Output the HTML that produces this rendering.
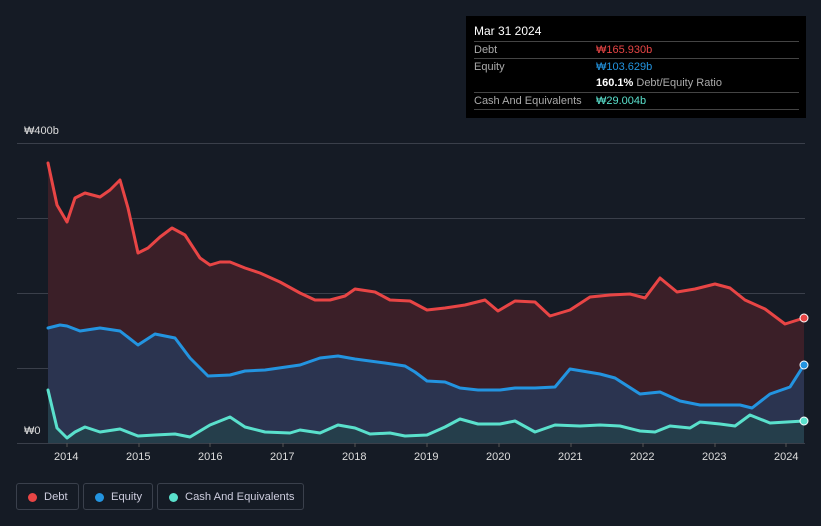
<!DOCTYPE html>
<html><head><style>
body{margin:0;width:821px;height:526px;background:#151b25;font-family:"Liberation Sans",sans-serif;overflow:hidden;position:relative}
.tt{position:absolute;left:466px;top:16px;width:340px;height:102px;background:#000;color:#fff;font-size:11px}
.tt .h{position:absolute;left:8px;top:8px;font-size:12px}
.row{position:absolute;left:8px;width:325px;height:17px;line-height:17px;border-top:1px solid #444}
.row span.l{color:#aaa}
.row span.v{position:absolute;left:122px}
.leg{position:absolute;top:483px;height:27px;border:1px solid #3a404c;border-radius:3px;color:#ccd;font-size:11.2px;line-height:26px;box-sizing:border-box}
.leg i{position:absolute;left:11px;top:9px;width:9px;height:9px;border-radius:50%}
.leg span{position:absolute;left:27px}
.ax{position:absolute;color:#ddd;font-size:11px}
</style></head><body>
<svg width="821" height="526" style="position:absolute;left:0;top:0">
<g stroke="#3a3f4a" stroke-width="1">
<line x1="17" y1="143.5" x2="805" y2="143.5"/><line x1="17" y1="218.5" x2="805" y2="218.5"/><line x1="17" y1="293.5" x2="805" y2="293.5"/><line x1="17" y1="368.5" x2="805" y2="368.5"/><line x1="17" y1="443.5" x2="805" y2="443.5"/>
</g>
<polygon fill="#3b1f28" points="48,443 48,163 57,205 67,222 75,198 85,193 100,197 110,190 120,180 128,208 138,253 148,248 160,237 172,228 185,235 200,258 210,265 220,262 230,262 245,268 260,273 280,282 300,293 315,300 330,300 345,296 355,289 375,292 390,300 410,301 427,310 445,308 465,305 485,300 498,311 515,301 535,302 550,316 570,310 590,297 610,295 630,294 645,298 660,278 677,292 695,289 715,284 730,288 745,300 765,309 785,324 804,318 804,443"/>
<polygon fill="#2b3450" points="48,443 48,328 60,325 67,326 80,331 100,328 120,331 138,345 155,334 175,338 190,358 208,376 230,375 245,371 265,370 300,365 320,358 338,356 355,359 385,363 405,366 415,372 427,381 445,382 460,388 478,390 500,390 515,388 535,388 555,387 570,369 600,374 615,378 640,394 660,392 680,401 700,405 740,405 752,408 770,394 790,387 804,365 804,443"/>
<polygon fill="#24414a" opacity="0.8" points="48,443 48,390 57,428 67,438 75,432 85,427 100,432 120,429 138,436 155,435 175,434 190,437 210,425 230,417 245,427 265,432 290,433 300,430 320,433 338,425 355,428 370,434 390,433 405,436 427,435 445,427 460,419 478,424 500,424 515,421 535,432 555,425 580,426 600,425 620,426 640,431 655,432 670,426 690,428 700,422 720,424 735,426 750,415 770,423 804,421 804,443"/>
<g fill="none" stroke-width="3" stroke-linejoin="round" stroke-linecap="round">
<polyline stroke="#e84545" points="48,163 57,205 67,222 75,198 85,193 100,197 110,190 120,180 128,208 138,253 148,248 160,237 172,228 185,235 200,258 210,265 220,262 230,262 245,268 260,273 280,282 300,293 315,300 330,300 345,296 355,289 375,292 390,300 410,301 427,310 445,308 465,305 485,300 498,311 515,301 535,302 550,316 570,310 590,297 610,295 630,294 645,298 660,278 677,292 695,289 715,284 730,288 745,300 765,309 785,324 804,318"/>
<polyline stroke="#2394e0" points="48,328 60,325 67,326 80,331 100,328 120,331 138,345 155,334 175,338 190,358 208,376 230,375 245,371 265,370 300,365 320,358 338,356 355,359 385,363 405,366 415,372 427,381 445,382 460,388 478,390 500,390 515,388 535,388 555,387 570,369 600,374 615,378 640,394 660,392 680,401 700,405 740,405 752,408 770,394 790,387 804,365"/>
<polyline stroke="#5ae0cc" points="48,390 57,428 67,438 75,432 85,427 100,432 120,429 138,436 155,435 175,434 190,437 210,425 230,417 245,427 265,432 290,433 300,430 320,433 338,425 355,428 370,434 390,433 405,436 427,435 445,427 460,419 478,424 500,424 515,421 535,432 555,425 580,426 600,425 620,426 640,431 655,432 670,426 690,428 700,422 720,424 735,426 750,415 770,423 804,421"/>
</g>
<circle cx="804" cy="318" r="4" fill="#e84545" stroke="#fff" stroke-width="1"/>
<circle cx="804" cy="365" r="4" fill="#2394e0" stroke="#fff" stroke-width="1"/>
<circle cx="804" cy="421" r="4" fill="#5ae0cc" stroke="#fff" stroke-width="1"/>
<g stroke="#555" stroke-width="1">
<line x1="67" y1="443" x2="67" y2="447"/><line x1="139" y1="443" x2="139" y2="447"/><line x1="210" y1="443" x2="210" y2="447"/><line x1="283" y1="443" x2="283" y2="447"/><line x1="355" y1="443" x2="355" y2="447"/><line x1="427" y1="443" x2="427" y2="447"/><line x1="499" y1="443" x2="499" y2="447"/><line x1="571" y1="443" x2="571" y2="447"/><line x1="643" y1="443" x2="643" y2="447"/><line x1="715" y1="443" x2="715" y2="447"/><line x1="786" y1="443" x2="786" y2="447"/>
</g>
</svg>
<div class="ax" style="left:24px;top:125px">₩400b</div>
<div class="ax" style="left:17px;top:425px;background:#151b25;padding:0 7px">₩0</div>
<div class="ax" style="left:54px;top:451px">2014</div>
<div class="ax" style="left:126px;top:451px">2015</div>
<div class="ax" style="left:198px;top:451px">2016</div>
<div class="ax" style="left:270px;top:451px">2017</div>
<div class="ax" style="left:342px;top:451px">2018</div>
<div class="ax" style="left:414px;top:451px">2019</div>
<div class="ax" style="left:486px;top:451px">2020</div>
<div class="ax" style="left:558px;top:451px">2021</div>
<div class="ax" style="left:630px;top:451px">2022</div>
<div class="ax" style="left:702px;top:451px">2023</div>
<div class="ax" style="left:774px;top:451px">2024</div>
<div class="tt">
<div class="h">Mar 31 2024</div>
<div class="row" style="top:25px"><span class="l">Debt</span><span class="v" style="color:#e84545">₩165.930b</span></div>
<div class="row" style="top:42px"><span class="l">Equity</span><span class="v" style="color:#2394e0">₩103.629b</span></div>
<div class="row" style="top:59px;border-top:none"><span class="v"><b>160.1%</b> <span style="color:#aaa">Debt/Equity Ratio</span></span></div>
<div class="row" style="top:76px"><span class="l">Cash And Equivalents</span><span class="v" style="color:#5ae0cc">₩29.004b</span></div>
<div class="row" style="top:93px;height:0"></div>
</div>
<div class="leg" style="left:16px;width:63px"><i style="background:#e84545"></i><span>Debt</span></div>
<div class="leg" style="left:83px;width:70px"><i style="background:#2394e0"></i><span>Equity</span></div>
<div class="leg" style="left:157px;width:147px"><i style="background:#5ae0cc"></i><span>Cash And Equivalents</span></div>
</body></html>
